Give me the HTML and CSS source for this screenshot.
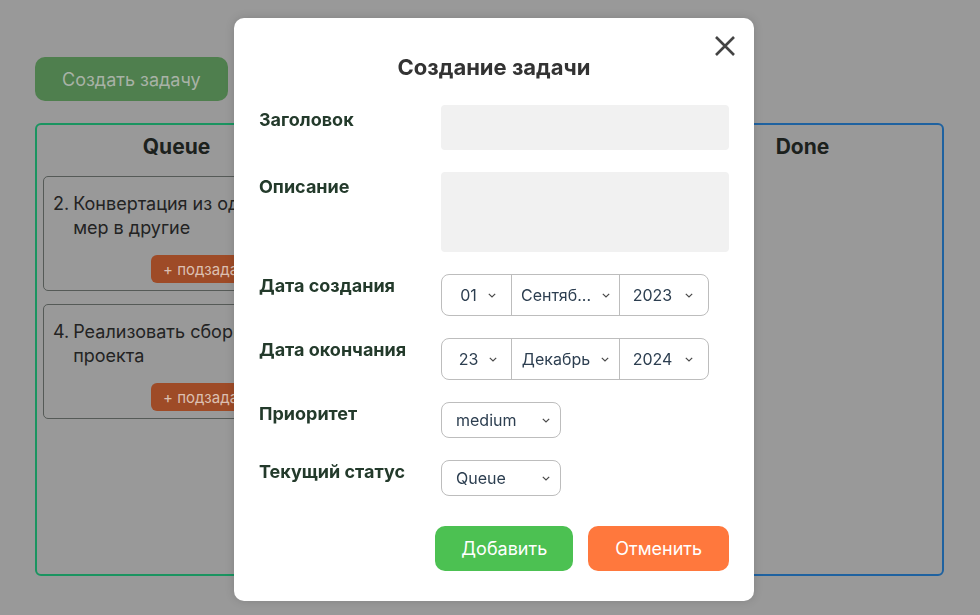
FILE: index.html
```html
<!DOCTYPE html>
<html lang="ru">
<head>
<meta charset="utf-8">
<title>Создание задачи</title>
<link rel="stylesheet" href="styles.css">
</head>
<body>
<div class="page">
  <button class="create-btn">Создать задачу</button>
  <div class="board">
    <section class="col col-queue">
      <h2 class="col-title">Queue</h2>
      <div class="card">
        <div class="card-text"><span class="num">2.</span><span>Конвертация из одной<br>мер в другие</span></div>
        <div class="card-actions"><button class="sub-btn">+ подзадача</button></div>
      </div>
      <div class="card">
        <div class="card-text"><span class="num">4.</span><span>Реализовать сборку проекта</span></div>
        <div class="card-actions"><button class="sub-btn">+ подзадача</button></div>
      </div>
    </section>
    <section class="col col-dev">
      <h2 class="col-title">Development</h2>
    </section>
    <section class="col col-done">
      <h2 class="col-title">Done</h2>
    </section>
  </div>
</div>

<div class="overlay">
  <div class="modal">
    <button class="close" aria-label="Закрыть">
      <svg width="22" height="22" viewBox="0 0 22 22"><path d="M2 2 L20 20 M20 2 L2 20" stroke="#444" stroke-width="2.6" stroke-linecap="butt" fill="none"/></svg>
    </button>
    <h1 class="modal-title">Создание задачи</h1>
    <div class="form">
      <label class="lbl lbl-input">Заголовок</label>
      <div class="field"><div class="text-input"></div></div>

      <label class="lbl lbl-input">Описание</label>
      <div class="field"><div class="text-area"></div></div>

      <label class="lbl lbl-select">Дата создания</label>
      <div class="field">
        <div class="date-group">
          <div class="seg seg-day"><span>01</span><svg class="chev" viewBox="0 0 8 5"><path d="M0.8 0.8 L4 4 L7.2 0.8" /></svg></div>
          <div class="seg seg-month"><span>Сентяб...</span><svg class="chev" viewBox="0 0 8 5"><path d="M0.8 0.8 L4 4 L7.2 0.8" /></svg></div>
          <div class="seg seg-year"><span>2023</span><svg class="chev" viewBox="0 0 8 5"><path d="M0.8 0.8 L4 4 L7.2 0.8" /></svg></div>
        </div>
      </div>

      <label class="lbl lbl-select">Дата окончания</label>
      <div class="field">
        <div class="date-group">
          <div class="seg seg-day"><span>23</span><svg class="chev" viewBox="0 0 8 5"><path d="M0.8 0.8 L4 4 L7.2 0.8" /></svg></div>
          <div class="seg seg-month"><span>Декабрь</span><svg class="chev" viewBox="0 0 8 5"><path d="M0.8 0.8 L4 4 L7.2 0.8" /></svg></div>
          <div class="seg seg-year"><span>2024</span><svg class="chev" viewBox="0 0 8 5"><path d="M0.8 0.8 L4 4 L7.2 0.8" /></svg></div>
        </div>
      </div>

      <label class="lbl lbl-select">Приоритет</label>
      <div class="field">
        <div class="select"><span>medium</span><svg class="chev" viewBox="0 0 8 5"><path d="M0.8 0.8 L4 4 L7.2 0.8" /></svg></div>
      </div>

      <label class="lbl lbl-select">Текущий статус</label>
      <div class="field">
        <div class="select"><span>Queue</span><svg class="chev" viewBox="0 0 8 5"><path d="M0.8 0.8 L4 4 L7.2 0.8" /></svg></div>
      </div>
    </div>
    <div class="actions">
      <button class="btn btn-add">Добавить</button>
      <button class="btn btn-cancel">Отменить</button>
    </div>
  </div>
</div>
</body>
</html>
```

FILE: styles.css
```css
* { box-sizing: border-box; }

html, body {
  margin: 0;
  padding: 0;
  height: 100%;
}

body {
  background: #999999;
  font-family: Inter, "Noto Sans", "Liberation Sans", sans-serif;
  color: #262626;
  overflow: hidden;
}

button {
  font-family: inherit;
  border: none;
  cursor: pointer;
}

.page {
  padding: 57px 36px 0 35px;
}

.create-btn {
  height: 44px;
  padding: 0 27px;
  border-radius: 10px;
  background: #4f7f4e;
  color: #a8b2a6;
  font-size: 18px;
}

.board {
  margin-top: 22px;
  display: grid;
  grid-template-columns: 283px 1fr 283px;
  gap: 30px;
}

.col {
  height: 453px;
  border: 2px solid #1a9460;
  border-radius: 6px;
  padding: 9px 6px 0 6px;
}

.col-dev { border-color: #a8603a; }
.col-done { border-color: #1f62a0; }

.col-title {
  margin: 0 0 17px 0;
  text-align: center;
  font-size: 21px;
  line-height: 25px;
  font-weight: 700;
  color: #1c211d;
}

.card {
  border: 1px solid #555a57;
  border-radius: 5px;
  padding: 15px 9px 7px 9px;
  margin-bottom: 13px;
}

.card-text {
  display: flex;
  gap: 4px;
  font-size: 18px;
  line-height: 24px;
  color: #232323;
}

.num { flex: none; }

.card-actions {
  margin-top: 15px;
  padding-left: 98px;
}

.sub-btn {
  height: 28px;
  padding: 0 12px;
  border-radius: 6px;
  background: #9e4b27;
  color: #dcc0b2;
  font-size: 15px;
  white-space: nowrap;
}

/* modal */
.overlay {
  position: fixed;
  inset: 0;
}

.modal {
  position: absolute;
  left: 234px;
  top: 18px;
  width: 520px;
  height: 583px;
  background: #ffffff;
  border-radius: 10px;
  box-shadow: 0 0 10px rgba(0, 0, 0, 0.15);
  padding: 36px 25px 30px 25px;
}

.close {
  position: absolute;
  top: 17px;
  right: 18px;
  width: 22px;
  height: 22px;
  padding: 0;
  background: transparent;
}

.close svg { display: block; }

.modal-title {
  margin: 0;
  text-align: center;
  font-size: 22px;
  line-height: 26px;
  font-weight: 700;
  color: #333333;
}

.form {
  margin-top: 25px;
  display: grid;
  grid-template-columns: 182px 1fr;
  row-gap: 22px;
}

.lbl {
  font-size: 18px;
  line-height: 21px;
  font-weight: 700;
  color: #233a2b;
}

.lbl-input { padding-top: 4px; }
.lbl-select { padding-top: 1px; }

.text-input {
  height: 45px;
  background: #f1f1f1;
  border-radius: 4px;
}

.text-area {
  height: 80px;
  background: #f1f1f1;
  border-radius: 4px;
}

.date-group {
  display: flex;
  width: 268px;
  height: 42px;
  border: 1px solid #bdbdbd;
  border-radius: 8px;
}

.seg {
  display: flex;
  align-items: center;
  justify-content: center;
  gap: 11px;
  font-size: 16px;
  color: #2c3e50;
}

.seg + .seg { border-left: 1px solid #bdbdbd; }

.seg-day { width: 69px; padding-left: 3px; }
.seg-month { width: 108px; }
.seg-year { flex: 1; gap: 13px; padding-right: 2px; }

.chev {
  width: 8px;
  height: 5px;
  fill: none;
  stroke: #4a4a4a;
  stroke-width: 1.2;
}

.select {
  display: flex;
  align-items: center;
  justify-content: space-between;
  width: 120px;
  height: 36px;
  border: 1px solid #bdbdbd;
  border-radius: 8px;
  padding: 0 10px 0 14px;
  font-size: 16px;
  color: #2c3e50;
}

.actions {
  margin-top: 30px;
  display: flex;
  justify-content: flex-end;
  gap: 15px;
}

.btn {
  height: 45px;
  padding: 0 26px;
  border-radius: 10px;
  color: #ffffff;
  font-size: 18px;
  font-weight: 400;
}

.btn-add { background: #4cc152; }
.btn-cancel { background: #ff783d; padding: 0 27px; }
```
